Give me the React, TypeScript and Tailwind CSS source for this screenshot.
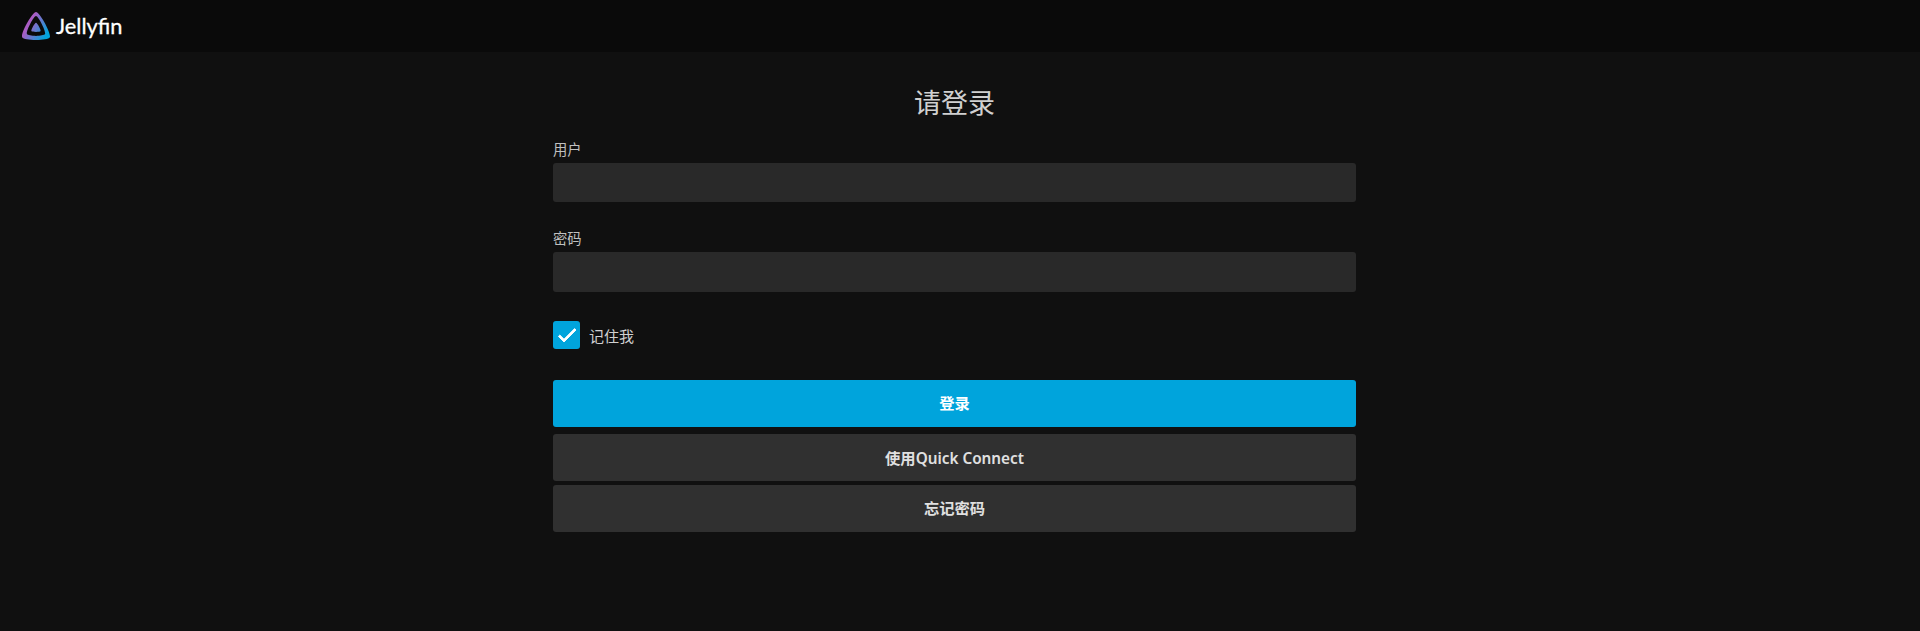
const font = "font-['Noto_Sans','Noto_Sans_CJK_SC',sans-serif]";

function Logo() {
  return (
    <svg width="28" height="28" viewBox="0 0 512 512">
      <defs>
        <linearGradient id="jf" x1="126" y1="219" x2="458" y2="411" gradientUnits="userSpaceOnUse">
          <stop offset="0" stopColor="#aa5cc3" />
          <stop offset="1" stopColor="#00a4dc" />
        </linearGradient>
      </defs>
      <path fill="url(#jf)" d="M256 196.2c-22.4 0-94.8 131.4-83.8 153.5s156.8 21.9 167.7 0-61.3-153.5-83.9-153.5Z" />
      <path fill="url(#jf)" d="M256 0C188.3 0-29.8 395.4 3.4 462.2s472.3 66 505.2 0S323.8 0 256 0Zm165.1 404.3c-21.6 43.2-308.3 43.8-330.2 0S211.7 75.4 256 75.4s186.7 285.7 165.1 328.9Z" />
    </svg>
  );
}

function Field({ label, className }: { label: string; className: string }) {
  return (
    <div className={className}>
      <label className="block h-[20px] text-[14.3px] leading-[20px] text-[#c0c0c0] mb-[3px]">{label}</label>
      <input className="block w-full h-[39.5px] rounded-[3px] bg-[#292929] outline-none" type="text" />
    </div>
  );
}

function Button({ children, className }: { children: React.ReactNode; className: string }) {
  return (
    <button className={`block w-full h-[47px] rounded-[3px] text-[15.3px] font-semibold ${className}`}>
      {children}
    </button>
  );
}

export default function App() {
  return (
    <div className={`h-[631px] bg-[#101010] overflow-hidden ${font}`}>
      <header className="h-[52px] bg-[#0a0a0a] flex items-center pl-[22px]">
        <Logo />
        <span className="ml-[6px] text-[21.8px] leading-none font-['Lato',sans-serif] font-normal text-white [-webkit-text-stroke:0.3px_#fff]">Jellyfin</span>
      </header>

      <main className="w-[803px] ml-[553px] pt-[33px]">
        <h1 className="h-[36px] text-center text-[27px] leading-[36px] font-normal text-[#d0d0d0]">请登录</h1>
        <Field label="用户" className="mt-[18.75px]" />
        <Field label="密码" className="mt-[27px]" />

        <div className="flex items-center mt-[29.25px]">
          <span className="w-[27px] h-[28px] rounded-[3px] bg-[#00a4dc] flex items-center justify-center">
            <svg width="24" height="24" viewBox="0 0 24 24" fill="#fff" stroke="#fff" strokeWidth="0.9">
              <path d="M9 16.17L4.83 12l-1.41 1.41L9 19 21 7l-1.41-1.41z" />
            </svg>
          </span>
          <span className="ml-[9px] pt-[2px] text-[15px] text-[#d0d0d0]">记住我</span>
        </div>

        <Button className="mt-[31px] bg-[#00a4dc] text-white">登录</Button>
        <Button className="mt-[7px] pt-[1px] bg-[#303030] text-[#e0e0e0]">使用Quick Connect</Button>
        <Button className="mt-[4px] bg-[#303030] text-[#e0e0e0]">忘记密码</Button>
      </main>
    </div>
  );
}
